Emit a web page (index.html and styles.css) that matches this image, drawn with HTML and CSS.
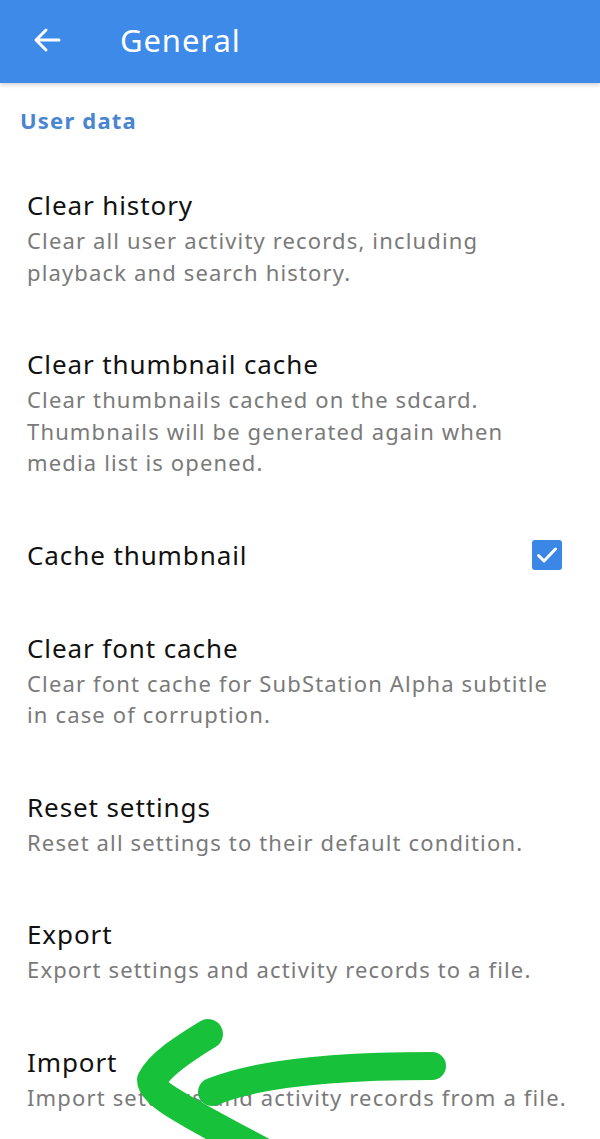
FILE: index.html
```html
<!DOCTYPE html>
<html>
<head>
<meta charset="utf-8">
<link rel="stylesheet" href="styles.css">
</head>
<body>
<div class="screen">
  <header class="appbar">
    <svg class="back" width="28" height="26" viewBox="0 0 28 26">
      <path d="M26 13H3M13 3L3 13l10 10" fill="none" stroke="#fff" stroke-width="3" stroke-linecap="round" stroke-linejoin="round"/>
    </svg>
    <h1 class="title">General</h1>
  </header>
  <div class="category">User data</div>
  <div class="list">
    <div class="item">
      <div class="text">
        <div class="name">Clear history</div>
        <div class="desc">Clear all user activity records, including<br>playback and search history.</div>
      </div>
    </div>
    <div class="item">
      <div class="text">
        <div class="name">Clear thumbnail cache</div>
        <div class="desc">Clear thumbnails cached on the sdcard.<br>Thumbnails will be generated again when<br>media list is opened.</div>
      </div>
    </div>
    <div class="item single">
      <div class="text">
        <div class="name">Cache thumbnail</div>
      </div>
      <span class="check">
        <svg width="30" height="30" viewBox="0 0 30 30"><rect x="0" y="0" width="30" height="30" rx="3" fill="#3b87e6"/><path d="M6.5 15.5l5.5 5.5L23.5 9" fill="none" stroke="#fff" stroke-width="3" stroke-linecap="round" stroke-linejoin="round"/></svg>
      </span>
    </div>
    <div class="item">
      <div class="text">
        <div class="name">Clear font cache</div>
        <div class="desc">Clear font cache for SubStation Alpha subtitle<br>in case of corruption.</div>
      </div>
    </div>
    <div class="item">
      <div class="text">
        <div class="name">Reset settings</div>
        <div class="desc">Reset all settings to their default condition.</div>
      </div>
    </div>
    <div class="item">
      <div class="text">
        <div class="name">Export</div>
        <div class="desc">Export settings and activity records to a file.</div>
      </div>
    </div>
    <div class="item">
      <div class="text">
        <div class="name">Import</div>
        <div class="desc">Import settings and activity records from a file.</div>
      </div>
    </div>
  </div>
  <svg class="scribble" width="600" height="1139" viewBox="0 0 600 1139">
    <path d="M208 1034 C185 1048 160 1064 152 1080 C152 1094 190 1114 262 1152" fill="none" stroke="#17c13a" stroke-width="30" stroke-linecap="round" stroke-linejoin="round"/>
    <path d="M212 1092 C260 1072 340 1066 432 1066" fill="none" stroke="#17c13a" stroke-width="28" stroke-linecap="round"/>
  </svg>
</div>
</body>
</html>
```
FILE: styles.css
```css
* { box-sizing: border-box; }
html, body { margin: 0; padding: 0; background: #fff; }
body { font-family: "Noto Sans", "Open Sans", sans-serif; }
.screen { position: relative; width: 600px; height: 1139px; overflow: hidden; background: #fff; }
.appbar {
  height: 83px;
  background: #3d8ae8;
  display: flex;
  align-items: center;
  padding-left: 33px;
  padding-bottom: 3px;
  box-shadow: 0 2px 4px rgba(0,0,0,0.18);
}
.back { display: block; }
.title {
  margin: 0 0 0 59px;
  color: #fff;
  font-weight: 400;
  font-size: 31px;
  letter-spacing: 0.9px;
}
.category {
  color: #4a86d0;
  font-weight: 700;
  font-size: 22px;
  letter-spacing: 1.2px;
  line-height: 34px;
  padding: 20px 0 0 20px;
}
.list { padding-top: 19px; }
.item {
  display: flex;
  align-items: center;
  padding: 0 38px 0 27px;
}
.item .text { flex: 1; padding: 31px 0 27px; }
.item.single .text { padding: 31px 0 26px; }
.name { color: #111; font-size: 26px; line-height: 36px; letter-spacing: 0.9px; }
.desc { color: #7a7a7a; font-size: 22px; line-height: 31.5px; margin-top: 2px; letter-spacing: 1.15px; white-space: nowrap; }
.check { display: flex; margin-top: 5px; }
.scribble { position: absolute; left: 0; top: 0; pointer-events: none; }
```
